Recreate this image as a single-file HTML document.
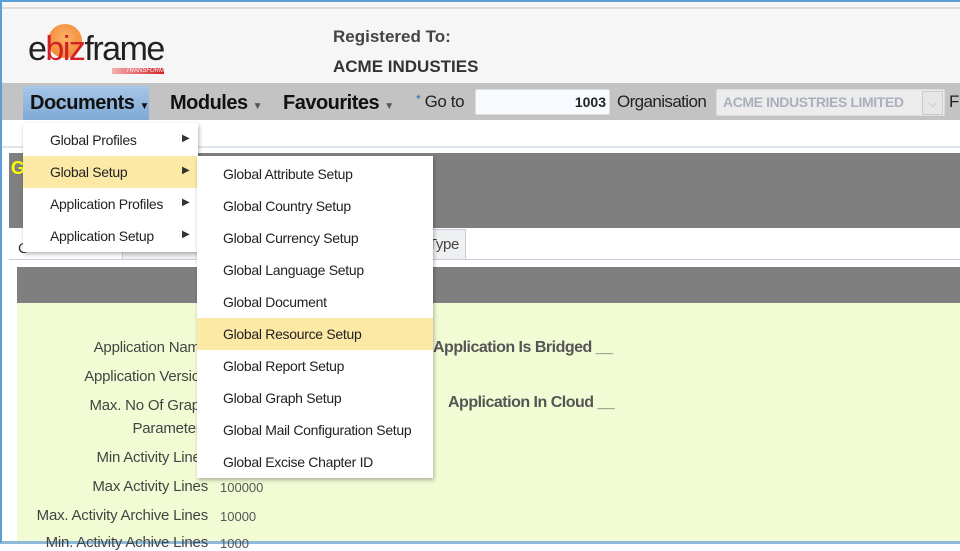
<!DOCTYPE html>
<html><head><meta charset="utf-8"><style>
*{margin:0;padding:0;box-sizing:border-box}
body{width:960px;height:544px;overflow:hidden;background:#fff;font-family:"Liberation Sans",sans-serif;color:#333;position:relative}
.a{position:absolute}
.m{font-size:14px;letter-spacing:-0.3px;color:#222}
.lbl{position:absolute;right:752px;font-size:15px;color:#444;text-align:right;white-space:nowrap;letter-spacing:-0.2px}
</style></head><body>
<div class="a" style="left:0;top:0;width:960px;height:544px;border:2px solid #5aa0d8;border-right:none;border-bottom:3px solid #8fb9d9"></div>
<div class="a" style="left:2px;top:2px;width:958px;height:118px;background:#f6f6f6"></div>
<div class="a" style="left:2px;top:7px;width:958px;height:2px;background:#ddd"></div>
<!-- logo -->
<div class="a" style="left:48px;top:24px;width:34px;height:34px;border-radius:50%;background:radial-gradient(circle at 50% 40%,#fbb36a,#f07a20)"></div>
<div class="a" style="left:28px;top:30px;font-size:34px;letter-spacing:-1.5px;color:#222">e<span style="color:#d31f26">biz</span>frame</div>
<div class="a" style="left:112px;top:68px;width:52px;height:6px;background:linear-gradient(90deg,#f4b0b0,#d31f26);font-size:6px;color:#fff;font-style:italic;text-align:right;line-height:6px">TRANSFORM</div>
<div class="a" style="left:333px;top:27px;font-weight:bold;font-size:17px;color:#444">Registered To:</div>
<div class="a" style="left:333px;top:57px;font-weight:bold;font-size:17px;color:#333">ACME INDUSTIES</div>
<!-- nav -->
<div class="a" style="left:2px;top:83px;width:958px;height:37px;background:#c3c3c3"></div>
<div class="a" style="left:23px;top:86px;width:126px;height:34px;background:linear-gradient(#a6c6e6,#7fa9d6);border-radius:3px 3px 0 0"></div>
<div class="a" style="left:30px;top:92px;font-weight:bold;font-size:20px;color:#111;letter-spacing:-0.5px">Documents <span style="font-size:10px">▼</span></div>
<div class="a" style="left:170px;top:92px;font-weight:bold;font-size:20px;color:#111;letter-spacing:-0.5px">Modules <span style="font-size:10px;color:#555">▼</span></div>
<div class="a" style="left:283px;top:92px;font-weight:bold;font-size:20px;color:#111;letter-spacing:-0.5px">Favourites <span style="font-size:10px;color:#555">▼</span></div>
<div class="a" style="left:416px;top:92px;font-size:17px;color:#222;letter-spacing:-0.4px"><span style="color:#2a6fb0;font-size:12px;vertical-align:top">*</span> Go to</div>
<div class="a" style="left:475px;top:89px;width:135px;height:26px;background:#f7fbff;border:1px solid #ddd;border-radius:2px;text-align:right;padding-right:3px;font-size:14px;font-weight:bold;line-height:24px;color:#222">1003</div>
<div class="a" style="left:617px;top:92px;font-size:17px;color:#222;letter-spacing:-0.6px">Organisation</div>
<div class="a" style="left:716px;top:89px;width:229px;height:27px;background:#ececec;border:1px solid #ddd;border-radius:2px;font-size:14px;font-weight:bold;line-height:25px;padding-left:6px;color:#a9b0bb;letter-spacing:-0.4px;white-space:nowrap;overflow:hidden">ACME INDUSTRIES LIMITED</div>
<div class="a" style="left:922px;top:91px;width:21px;height:24px;border:1px solid #ccc;background:#e6e6e6;color:#aaa;font-size:11px;text-align:center;line-height:24px">⌵</div>
<div class="a" style="left:949px;top:92px;font-size:17px;color:#222">F</div>
<div class="a" style="left:2px;top:146px;width:958px;height:2px;background:#dde6ee"></div>
<!-- panels -->
<div class="a" style="left:9px;top:153px;width:951px;height:75px;background:#7f7f7f"></div>
<div class="a" style="left:11px;top:158px;font-weight:bold;font-size:18px;color:#ff0">G</div>
<div class="a" style="left:9px;top:228px;width:951px;height:32px;background:#fff;border-bottom:1px solid #ccd"></div>
<div class="a" style="left:122px;top:229px;width:344px;height:30px;background:#eef0f2;border:1px solid #ccd;border-bottom:none"></div>
<div class="a" style="left:428px;top:236px;font-size:15px;color:#444;letter-spacing:-0.4px">Type</div>
<div class="a" style="left:18px;top:240px;font-size:15px;color:#333">C</div>
<div class="a" style="left:17px;top:267px;width:943px;height:36px;background:#7f7f7f"></div>
<div class="a" style="left:17px;top:303px;width:943px;height:238px;background:#f2fcd4"></div>
<div class="lbl" style="top:339px">Application Name</div>
<div class="lbl" style="top:368px">Application Version</div>
<div class="lbl" style="top:397px">Max. No Of Graph</div>
<div class="lbl" style="top:420px">Parameters</div>
<div class="lbl" style="top:449px">Min Activity Lines</div>
<div class="lbl" style="top:478px">Max Activity Lines</div>
<div class="lbl" style="top:507px">Max. Activity Archive Lines</div>
<div class="lbl" style="top:534px">Min. Activity Achive Lines</div>
<div class="a" style="left:220px;top:480px;font-size:13px;color:#555">100000</div>
<div class="a" style="left:220px;top:509px;font-size:13px;color:#555">10000</div>
<div class="a" style="left:220px;top:536px;font-size:13px;color:#555">1000</div>
<div class="a" style="left:433px;top:339px;font-size:16px;font-weight:bold;color:#555;letter-spacing:-0.5px">Application Is Bridged __</div>
<div class="a" style="left:448px;top:394px;font-size:16px;font-weight:bold;color:#555;letter-spacing:-0.5px">Application In Cloud __</div>
<!-- menu 1 -->
<div class="a" style="left:23px;top:123px;width:175px;height:129px;background:#fff;box-shadow:1px 2px 4px rgba(0,0,0,.3)"></div>
<div class="a" style="left:23px;top:156px;width:175px;height:32px;background:#fde9a6"></div>
<div class="a m" style="left:50px;top:132px">Global Profiles</div>
<div class="a m" style="left:50px;top:164px">Global Setup</div>
<div class="a m" style="left:50px;top:196px">Application Profiles</div>
<div class="a m" style="left:50px;top:228px">Application Setup</div>
<div class="a" style="left:182px;top:133px;font-size:10px">▶</div>
<div class="a" style="left:182px;top:165px;font-size:10px">▶</div>
<div class="a" style="left:182px;top:197px;font-size:10px">▶</div>
<div class="a" style="left:182px;top:229px;font-size:10px">▶</div>
<!-- menu 2 -->
<div class="a" style="left:197px;top:156px;width:236px;height:322px;background:#fff;box-shadow:1px 2px 4px rgba(0,0,0,.3)"></div>
<div class="a" style="left:197px;top:318px;width:236px;height:32px;background:#fde9a6"></div>
<div class="a m" style="left:223px;top:166px">Global Attribute Setup</div>
<div class="a m" style="left:223px;top:198px">Global Country Setup</div>
<div class="a m" style="left:223px;top:230px">Global Currency Setup</div>
<div class="a m" style="left:223px;top:262px">Global Language Setup</div>
<div class="a m" style="left:223px;top:294px">Global Document</div>
<div class="a m" style="left:223px;top:326px">Global Resource Setup</div>
<div class="a m" style="left:223px;top:358px">Global Report Setup</div>
<div class="a m" style="left:223px;top:390px">Global Graph Setup</div>
<div class="a m" style="left:223px;top:422px">Global Mail Configuration Setup</div>
<div class="a m" style="left:223px;top:454px">Global Excise Chapter ID</div>
</body></html>
